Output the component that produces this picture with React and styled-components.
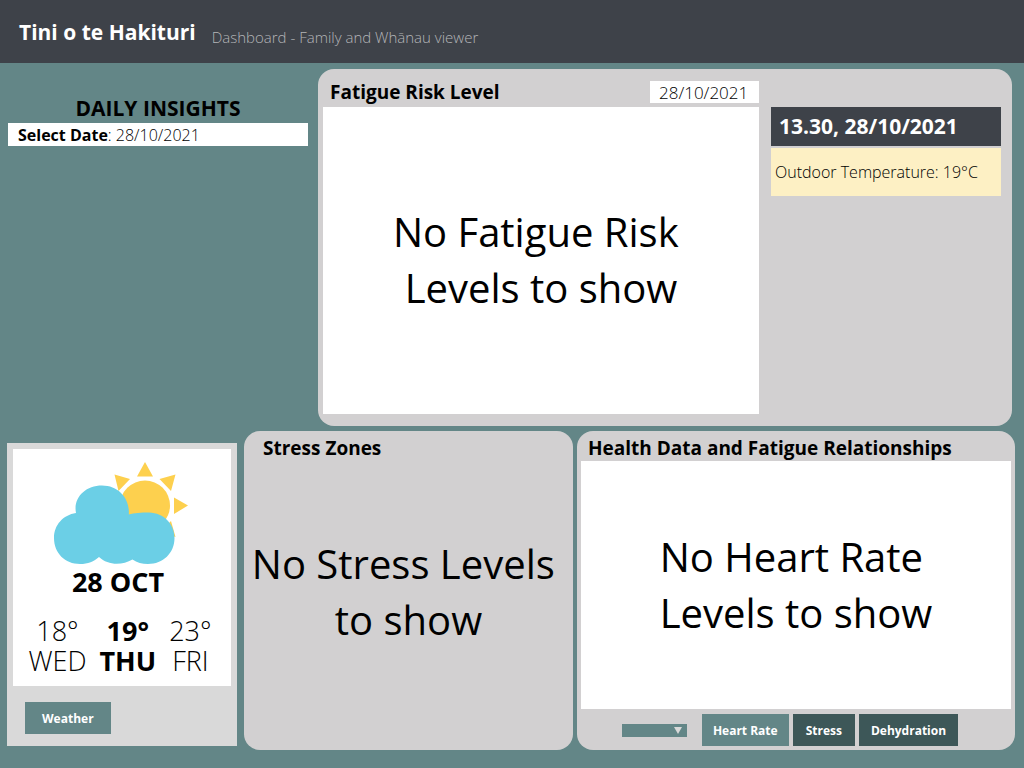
import React from "react";
import styled, { createGlobalStyle } from "styled-components";

const color = {
  teal: "#638687",
  tealDark: "#3d5758",
  slate: "#3e4249",
  panel: "#d2d0d1",
  card: "#d9d9d9",
  cream: "#fdf0c4",
};

const GlobalStyle = createGlobalStyle`
  *, *::before, *::after { box-sizing: border-box; }
  body {
    margin: 0;
    background: ${color.teal};
    color: #000;
    font-family: "Open Sans", "Noto Sans", sans-serif;
  }
  h1, h2, p { margin: 0; }
  button, input, select { font: inherit; color: inherit; border: 0; border-radius: 0; padding: 0; }
`;

const Page = styled.div`
  min-height: 100vh;
  display: flex;
  flex-direction: column;
`;

const Header = styled.header`
  display: flex;
  align-items: flex-start;
  gap: 16px;
  padding: 16px 19px 15px;
  background: ${color.slate};
`;

const Brand = styled.h1`
  color: #fff;
  font-size: 21px;
  line-height: 32px;
`;

const Tagline = styled.p`
  padding-top: 10px;
  color: #b4b5b8;
  font-size: 15px;
  font-weight: 300;
  line-height: 22px;
`;

const TopRow = styled.div`
  display: grid;
  grid-template-columns: minmax(0, 300fr) minmax(0, 694fr);
  gap: 10px;
  padding: 6px 12px 0 8px;
`;

const BottomRow = styled.div`
  display: grid;
  grid-template-columns: minmax(0, 233fr) minmax(0, 329fr) minmax(0, 438fr);
  gap: 4px;
  padding: 5px 9px 18px 7px;
`;

const Insights = styled.section`
  padding-top: 24px;
`;

const InsightsTitle = styled.h2`
  text-align: center;
  font-size: 21px;
  line-height: 30px;
`;

const DateField = styled.div`
  display: flex;
  height: 23px;
  padding: 0 10px;
  background: #fff;
  font-size: 16px;
  line-height: 24px;

  label { font-weight: 300; white-space: pre; }
  label span { font-weight: 700; }
`;

const DateInput = styled.input`
  width: 100%;
  min-width: 0;
  background: transparent;
  font-weight: 300;
`;

const Panel = styled.section`
  display: flex;
  flex-direction: column;
  min-height: ${(p) => p.$height}px;
  padding: ${(p) => p.$padding};
  border-radius: 16px;
  background: ${color.panel};
`;

const PanelTitle = styled.h2`
  padding: 0 0 1px ${(p) => p.$indent || 7}px;
  font-size: 19px;
  line-height: 24px;
`;

const FatigueGrid = styled.div`
  flex: 1;
  display: grid;
  grid-template-columns: minmax(0, 436fr) minmax(0, 230fr);
  grid-template-rows: 38px 1fr;
  column-gap: 12px;
`;

const FatigueHead = styled.div`
  grid-column: 1 / 2;
  display: flex;
  justify-content: space-between;
  align-items: center;
  padding-top: 8px;
`;

const PanelDate = styled.input`
  width: 109px;
  height: 22px;
  padding: 1px 9px 0;
  background: #fff;
  font-size: 17px;
  font-weight: 300;
`;

const Display = styled.div`
  flex: 1;
  display: flex;
  align-items: center;
  justify-content: center;
  padding-bottom: ${(p) => (p.$plain ? 28 : 0)}px;
  background: ${(p) => (p.$plain ? "transparent" : "#fff")};
`;

const FatigueDisplay = styled(Display)`
  grid-area: 2 / 1;
  padding-bottom: 2px;
`;

const EmptyMessage = styled.p`
  font-size: 40px;
  line-height: 56px;
  text-align: ${(p) => p.$align || "center"};
  white-space: pre;
`;

const Readings = styled.div`
  grid-area: 2 / 2;
`;

const Timestamp = styled.p`
  margin-bottom: 2px;
  padding: 0 8px;
  background: ${color.slate};
  color: #fff;
  font-size: 21px;
  font-weight: 700;
  line-height: 39px;
`;

const Reading = styled.p`
  padding: 0 4px;
  background: ${color.cream};
  font-size: 16px;
  font-weight: 300;
  line-height: 48px;
`;

const WeatherCard = styled.section`
  display: flex;
  flex-direction: column;
  margin: 12px 3px 4px 0;
  padding: 6px;
  background: ${color.card};
`;

const Forecast = styled.div`
  display: flex;
  flex-direction: column;
  align-items: center;
  height: 237px;
  padding-top: 12px;
  background: #fff;
`;

const WeatherIcon = styled.svg`
  display: block;
  width: 138px;
  height: 103px;
`;

const Today = styled.h2`
  padding-right: 8px;
  font-size: 27px;
  line-height: 36px;
`;

const Days = styled.div`
  display: flex;
  justify-content: center;
  gap: 13px;
  margin-top: 16px;
  padding-right: 4px;
`;

const Day = styled.p`
  font-size: 27px;
  font-weight: ${(p) => (p.$current ? 700 : 300)};
  line-height: 30px;
  text-align: center;
`;

const Button = styled.button`
  height: 32px;
  padding: 0 ${(p) => p.$pad || 12}px;
  background: ${(p) => (p.$dark ? color.tealDark : color.teal)};
  color: #fff;
  font-size: 12px;
  font-weight: 700;
  white-space: nowrap;
  cursor: pointer;
`;

const WeatherActions = styled.div`
  padding: 16px 12px 5px;
`;

const Controls = styled.div`
  display: flex;
  align-items: center;
  justify-content: center;
  gap: 4px;
  padding: 5px 12px 4px 0;
`;

const SelectWrap = styled.div`
  display: grid;
  align-items: center;
  margin-right: 11px;

  > * { grid-area: 1 / 1; }
  svg { justify-self: end; margin-right: 5px; pointer-events: none; }
`;

const Select = styled.select`
  appearance: none;
  width: 65px;
  height: 13px;
  background: ${color.teal};
`;

function PartlyCloudy() {
  return (
    <WeatherIcon viewBox="53 461 138 103" role="img" aria-label="Partly cloudy">
      <g fill="#fdd04e">
        <circle cx="145" cy="505.500" r="25" />
        <path d="M145 462 153 476.500H137ZM114.500 474.500 130 479 118.500 491ZM175.500 474.500 171 491 159.500 479ZM188 505.500 174 514V497.500ZM175.500 537 171 521 160 532Z" />
      </g>
      <path
        fill="#6bcfe6"
        d="M76 513C73 498 85 485.500 102 485.500C119 485.500 130 499 128.800 514.500C134 513 141 512.500 149 512.500C164 513 174.500 524 174.500 538C174.500 553 163 564 148 564C142 564 137 562.500 132.500 559.500C122 565.500 108 565.500 99 557C94 561.500 88 564 80 564C65 564 54 553 54 538C54 525 63 515 76 513Z"
      />
    </WeatherIcon>
  );
}

export default function App() {
  return (
    <Page>
      <GlobalStyle />
      <Header>
        <Brand>Tini o te Hakituri</Brand>
        <Tagline>Dashboard - Family and Whānau viewer</Tagline>
      </Header>
      <main>
        <TopRow>
          <Insights>
            <InsightsTitle>DAILY INSIGHTS</InsightsTitle>
            <DateField>
              <label htmlFor="insight-date">
                <span>Select Date</span>:{" "}
              </label>
              <DateInput id="insight-date" defaultValue="28/10/2021" />
            </DateField>
          </Insights>
          <Panel $height={357} $padding="0 11px 12px 5px">
            <FatigueGrid>
              <FatigueHead>
                <PanelTitle>Fatigue Risk Level</PanelTitle>
                <PanelDate aria-label="Fatigue risk date" defaultValue="28/10/2021" />
              </FatigueHead>
              <FatigueDisplay>
                <EmptyMessage>{"No Fatigue Risk \nLevels to show"}</EmptyMessage>
              </FatigueDisplay>
              <Readings>
                <Timestamp>13.30, 28/10/2021</Timestamp>
                <Reading>Outdoor Temperature: 19°C</Reading>
              </Readings>
            </FatigueGrid>
          </Panel>
        </TopRow>
        <BottomRow>
          <WeatherCard>
            <Forecast>
              <PartlyCloudy />
              <Today>28 OCT</Today>
              <Days>
                <Day>18°<br />WED</Day>
                <Day $current>19°<br />THU</Day>
                <Day>23°<br />FRI</Day>
              </Days>
            </Forecast>
            <WeatherActions>
              <Button $pad={17}>Weather</Button>
            </WeatherActions>
          </WeatherCard>
          <Panel $height={319} $padding="5px 0 0">
            <PanelTitle $indent={19}>Stress Zones</PanelTitle>
            <Display $plain>
              <EmptyMessage>{"No Stress Levels \nto show"}</EmptyMessage>
            </Display>
          </Panel>
          <Panel $height={319} $padding="5px 4px 0">
            <PanelTitle>Health Data and Fatigue Relationships</PanelTitle>
            <Display>
              <EmptyMessage $align="left">{"No Heart Rate\nLevels to show"}</EmptyMessage>
            </Display>
            <Controls>
              <SelectWrap>
                <Select aria-label="Health data range" defaultValue="">
                  <option value=""></option>
                </Select>
                <svg width="8" height="7" viewBox="0 0 8 7" aria-hidden="true">
                  <path d="M0 0H8L4 7Z" fill="#d9d9d9" />
                </svg>
              </SelectWrap>
              <Button $pad={11}>Heart Rate</Button>
              <Button $dark $pad={13}>Stress</Button>
              <Button $dark>Dehydration</Button>
            </Controls>
          </Panel>
        </BottomRow>
      </main>
    </Page>
  );
}
